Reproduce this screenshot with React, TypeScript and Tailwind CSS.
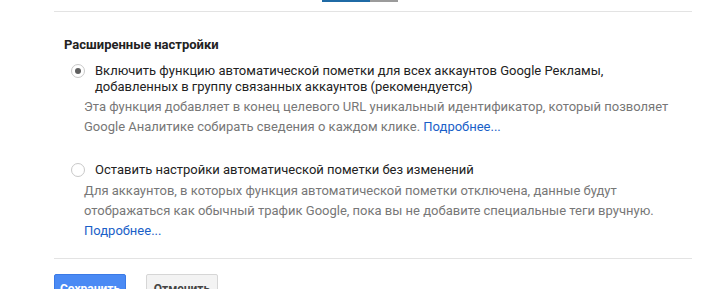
import React from 'react';

const options = [
  {
    label: 'Включить функцию автоматической пометки для всех аккаунтов Google Рекламы, добавленных в группу связанных аккаунтов (рекомендуется)',
    text: 'Эта функция добавляет в конец целевого URL уникальный идентификатор, который позволяет Google Аналитике собирать сведения о каждом клике.',
    checked: true,
  },
  {
    label: 'Оставить настройки автоматической пометки без изменений',
    text: 'Для аккаунтов, в которых функция автоматической пометки отключена, данные будут отображаться как обычный трафик Google, пока вы не добавите специальные теги вручную.',
    checked: false,
  },
];

function Radio({ checked }: { checked: boolean }) {
  return (
    <div className="w-[14px] h-[14px] mt-[1px] shrink-0 rounded-full border border-[#c8c8c8] bg-white flex items-center justify-center">
      {checked && <div className="w-[6px] h-[6px] rounded-full bg-[#5f5f5f]" />}
    </div>
  );
}

export default function App() {
  return (
    <div className="w-[702px] h-[289px] overflow-hidden bg-white font-['Roboto','Liberation_Sans',sans-serif] text-[13px]">
      <div className="flex ml-[322px] h-[2px]">
        <div className="w-[48px] bg-[#1f6aa5]" />
        <div className="w-[28px] bg-[#9b9b9b]" />
      </div>
      <div className="ml-[54px] w-[638px] h-px bg-[#e3e3e3] mt-[9px]" />

      <div className="ml-[64px] mt-[25px]">
        <h2 className="font-bold text-[13px] leading-[16px] text-[#222]">Расширенные настройки</h2>

        <div className="flex flex-col mt-[10px] ml-[7px]">
          {options.map((o, i) => (
            <div key={i} className={i > 0 ? 'mt-[25px]' : ''}>
              <div className="flex gap-[10px]">
                <Radio checked={o.checked} />
                <div className="text-[#222] leading-[16px] w-[540px]">{o.label}</div>
              </div>
              <p className={`ml-[13px] text-[#777] leading-[20px] ${i > 0 ? 'mt-[3px] w-[600px]' : 'mt-[2px] w-[590px]'}`}>
                {o.text}{' '}
                <a className="text-[#1a5fc8]">Подробнее...</a>
              </p>
            </div>
          ))}
        </div>
      </div>

      <div className="ml-[54px] w-[638px] h-px bg-[#e3e3e3] mt-[17px]" />

      <div className="flex gap-[20px] ml-[54px] mt-[15px]">
        <button className="w-[72px] h-[29px] rounded-[2px] bg-[#4a8af4] border border-[#3b7ae6] text-white font-bold text-[12px]">
          Сохранить
        </button>
        <button className="w-[72px] h-[29px] rounded-[2px] bg-[#f3f3f3] border border-[#d6d6d6] text-[#444] font-bold text-[12px]">
          Отменить
        </button>
      </div>
    </div>
  );
}
